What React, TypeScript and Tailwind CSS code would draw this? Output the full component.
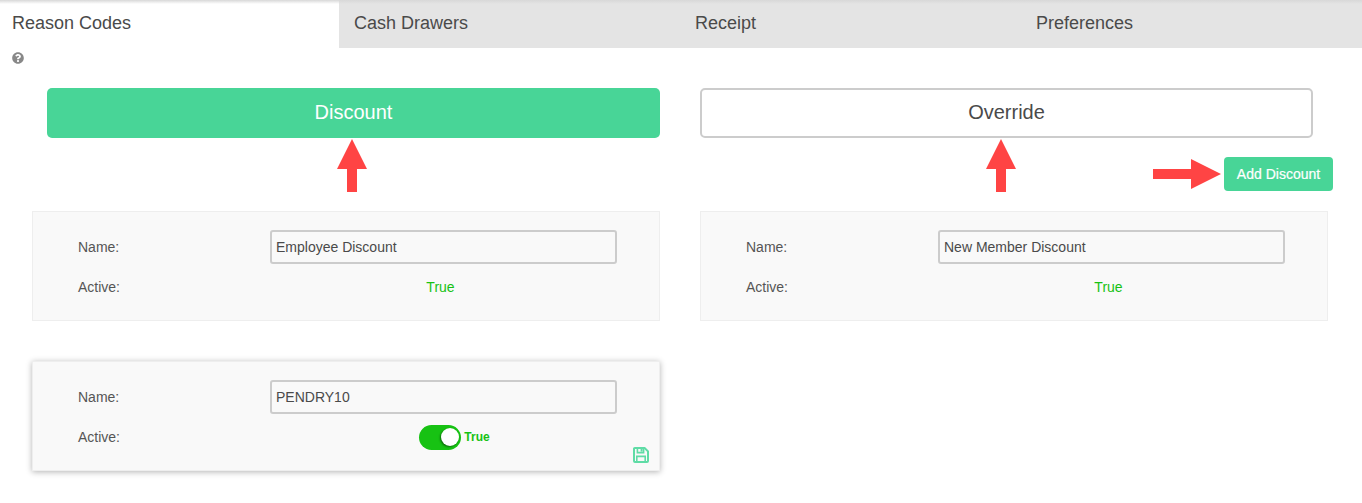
import React from "react";
import { FaQuestionCircle } from "react-icons/fa";

function Tab({ label, active, width }: { label: string; active?: boolean; width: string }) {
  return (
    <div className={`h-full flex items-center pb-[2px] text-[18px] text-[#4a4a4a] ${width} ${active ? "bg-white pl-[12px]" : "bg-[#e4e4e4] pl-[15px]"}`}>
      {label}
    </div>
  );
}

function Field({ label, children }: { label: string; children: React.ReactNode }) {
  return (
    <div className="flex items-center h-[34px]">
      <div className="w-[192px] text-[14px] text-[#555]">{label}</div>
      <div className="w-[347px] flex justify-center items-center">{children}</div>
    </div>
  );
}

function SaveIcon() {
  return (
    <svg className="absolute left-[600px] top-[85px]" width="16" height="16" viewBox="0 0 16 16" fill="none">
      <path d="M1.8 1 H11.6 L15 4.4 V14 A1 1 0 0 1 14 15 H2 A1 1 0 0 1 1 14 V1.8 A.8 .8 0 0 1 1.8 1 Z" stroke="#5fdca6" strokeWidth="2" />
      <path d="M4.4 1 V5.6 H10.6 V1" stroke="#5fdca6" strokeWidth="1.6" />
      <rect x="7.6" y="2" width="2" height="2.6" fill="#5fdca6" />
      <path d="M3.8 15 V9.4 H12.2 V15" stroke="#5fdca6" strokeWidth="1.6" />
    </svg>
  );
}

function Panel({ name, edit, extra = "" }: { name: string; edit?: boolean; extra?: string }) {
  return (
    <div className={`relative w-[628px] h-[110px] bg-[#f9f9f9] border border-[#eeeeee] pl-[45px] pt-[18px] flex flex-col gap-[6px] ${extra}`}>
      <Field label="Name:">
        <div className="w-[347px] h-[34px] border-2 border-[#cccccc] rounded-[3px] flex items-center pl-[4px] text-[14px] text-[#4a4a4a]">{name}</div>
      </Field>
      <Field label="Active:">
        {edit ? (
          <div className="flex items-center gap-[3px] ml-[22px]">
            <div className="w-[42px] h-[25px] rounded-full bg-[#17c213] flex items-center justify-end pr-[2px]">
              <div className="w-[18px] h-[18px] rounded-full bg-white shadow-[-1px_1px_2px_rgba(0,0,0,0.45)]" />
            </div>
            <span className="text-[12px] font-bold text-[#17c213]">True</span>
          </div>
        ) : (
          <span className="text-[14px] text-[#17c213] mr-[6px]">True</span>
        )}
      </Field>
      {edit && <SaveIcon />}
    </div>
  );
}

function ArrowUp({ className }: { className: string }) {
  return (
    <svg className={`absolute ${className}`} width="30" height="53" viewBox="0 0 30 53">
      <path d="M15 0 L30 30 L20 30 L20 53 L10 53 L10 30 L0 30 Z" fill="#ff4444" />
    </svg>
  );
}

export default function App() {
  return (
    <div className="relative w-[1362px] h-[503px] bg-white overflow-hidden font-['Liberation_Sans',Arial,sans-serif]">
      <div className="relative h-[48px] flex">
        <Tab label="Reason Codes" active width="w-[339px]" />
        <Tab label="Cash Drawers" width="w-[341px]" />
        <Tab label="Receipt" width="w-[341px]" />
        <Tab label="Preferences" width="w-[341px]" />
        <div className="absolute inset-x-0 top-0 h-[4px] bg-gradient-to-b from-[#d8d8d8] to-transparent" />
      </div>

      <div className="h-[40px] pl-[12px] pt-[4px]">
        <FaQuestionCircle className="text-[12px] text-[#888888]" />
      </div>

      <div className="flex pl-[47px] gap-[40px]">
        <div className="w-[613px] h-[50px] rounded-[5px] bg-[#48d597] flex items-center justify-center pb-[2px] text-[20px] text-white">Discount</div>
        <div className="w-[613px] h-[50px] rounded-[5px] bg-white border-2 border-[#cccccc] flex items-center justify-center pb-[2px] text-[20px] text-[#4a4a4a]">Override</div>
      </div>

      <div className="flex justify-end pr-[29px] mt-[19px]">
        <div className="w-[109px] h-[34px] rounded-[4px] bg-[#48d597] flex items-center justify-center text-[14px] text-white [-webkit-text-stroke:0.2px_white]">Add Discount</div>
      </div>

      <div className="flex pl-[32px] gap-[40px] mt-[20px]">
        <Panel name="Employee Discount" />
        <Panel name="New Member Discount" />
      </div>

      <div className="pl-[32px] mt-[40px]">
        <Panel name="PENDRY10" edit extra="shadow-[0_1px_6px_rgba(0,0,0,0.3)]" />
      </div>

      <ArrowUp className="left-[337px] top-[139px]" />
      <ArrowUp className="left-[986px] top-[139px]" />
      <svg className="absolute left-[1153px] top-[159px]" width="68" height="30" viewBox="0 0 68 30">
        <path d="M68 15 L38 0 L38 10 L0 10 L0 20 L38 20 L38 30 Z" fill="#ff4444" />
      </svg>
    </div>
  );
}
